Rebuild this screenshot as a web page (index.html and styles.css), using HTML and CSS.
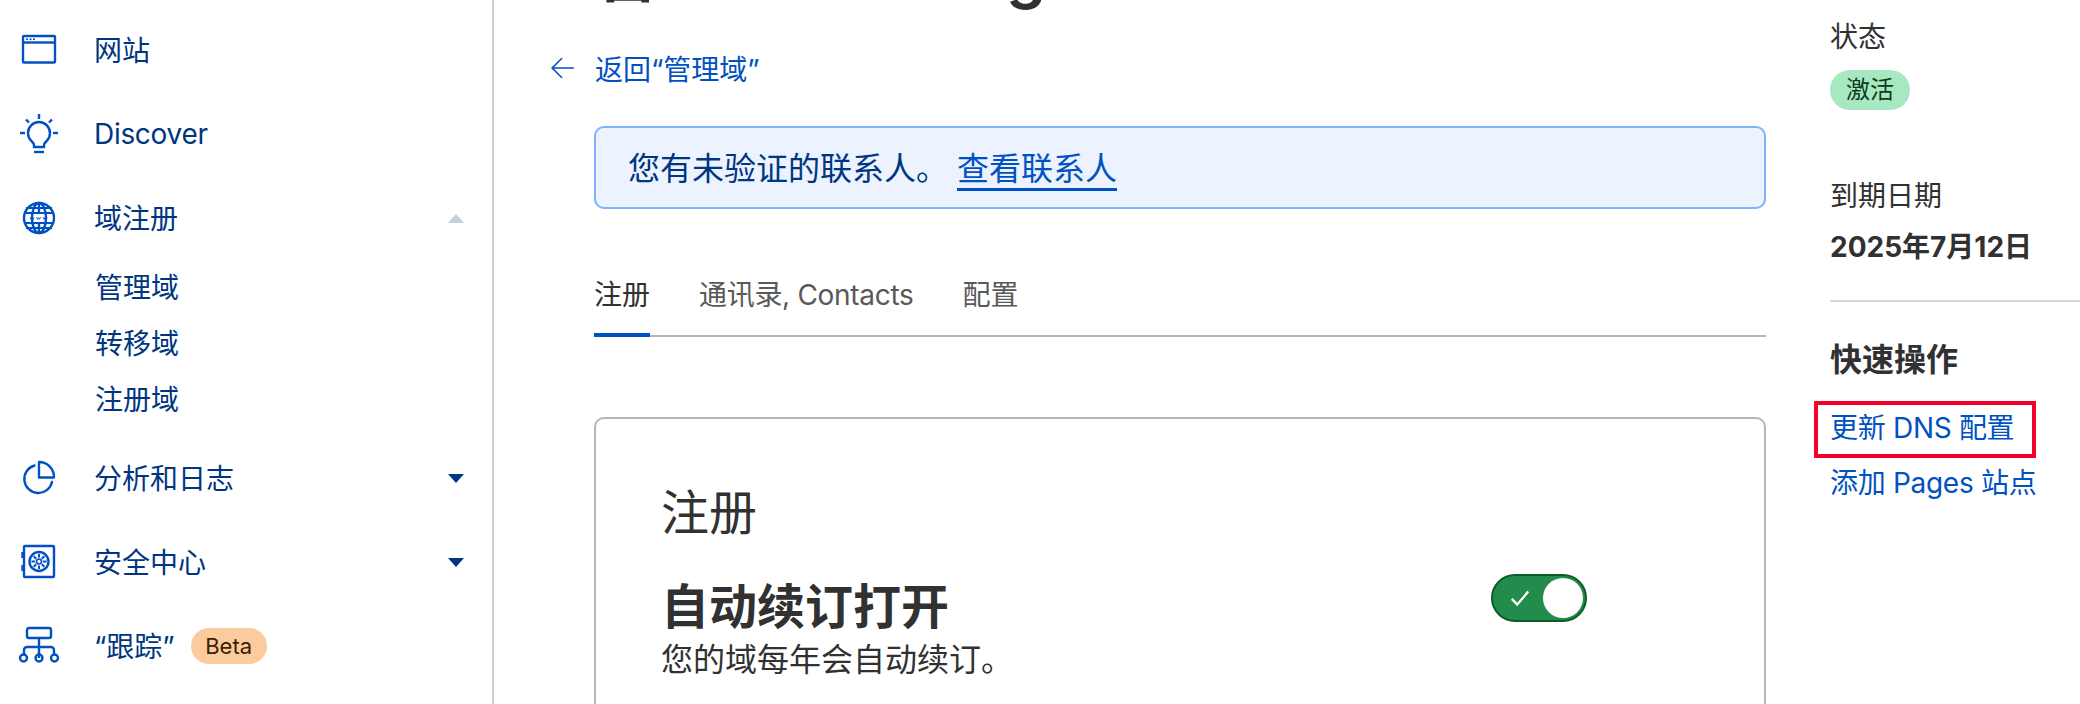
FILE: index.html
```html
<!DOCTYPE html>
<html lang="zh-CN">
<head>
    <meta charset="UTF-8">
    <meta name="viewport" content="width=device-width, initial-scale=1.0">
    <title>管理域</title>
    <link rel="stylesheet" href="styles.css">
</head>
<body>
    <aside class="sidebar">
        <a class="nav-item">
            <svg class="nav-icon" viewBox="0 0 40 40" fill="none" stroke="currentColor" stroke-width="2.4" stroke-linejoin="round">
                <rect x="4" y="6" width="32" height="26.5" rx="1"></rect>
                <line x1="4" y1="12.5" x2="36" y2="12.5"></line>
                <line x1="7" y1="9.3" x2="9" y2="9.3" stroke-width="1.6"></line>
                <line x1="10.5" y1="9.3" x2="12.5" y2="9.3" stroke-width="1.6"></line>
                <line x1="14" y1="9.3" x2="16" y2="9.3" stroke-width="1.6"></line>
            </svg>
            <span class="nav-label">网站</span>
        </a>
        <a class="nav-item">
            <svg class="nav-icon" viewBox="0 0 40 40" fill="none" stroke="currentColor" stroke-width="2.4">
                <path d="M15 33v-2c0-1.500-1-2-2.600-4a11 11 0 1 1 15.200 0c-1.600 2-2.600 2.500-2.600 4v2z"></path>
                <line x1="15" y1="38" x2="25" y2="38"></line>
                <line x1="20" y1="0" x2="20" y2="5"></line>
                <line x1="7" y1="5.500" x2="10" y2="8.500"></line>
                <line x1="33" y1="5.500" x2="30" y2="8.500"></line>
                <line x1="1" y1="19" x2="6" y2="19"></line>
                <line x1="34" y1="19" x2="39" y2="19"></line>
            </svg>
            <span class="latin">Discover</span>
        </a>
        <a class="nav-item">
            <svg class="nav-icon" viewBox="0 0 40 40" fill="none" stroke="currentColor" stroke-width="2.400">
                <circle cx="20" cy="20" r="15"></circle>
                <ellipse cx="20" cy="20" rx="7" ry="15"></ellipse>
                <line x1="20" y1="5" x2="20" y2="15"></line>
                <line x1="20" y1="25" x2="20" y2="35"></line>
                <path d="M7 10h26M6 15h28M6 25h28M7 30h26" stroke-width="2"></path>
                <path d="M11 19l1 2.500 1-2 1 2 1-2.500M17.500 19l1 2.500 1-2 1 2 1-2.500M24 19l1 2.500 1-2 1 2 1-2.500" stroke-width="0.800"></path>
            </svg>
            <span class="nav-label">域注册</span>
            <span class="caret caret-up"></span>
        </a>
        <div class="sub-nav">
            <a>管理域</a>
            <a>转移域</a>
            <a>注册域</a>
        </div>
        <a class="nav-item">
            <svg class="nav-icon" viewBox="0 0 40 40" fill="none" stroke="currentColor" stroke-width="2.400" stroke-linecap="round">
                <path d="M15.500 7.500A14 14 0 1 0 33 24"></path>
                <path d="M20 4a15 15 0 0 1 15 15.500H20z" stroke-linejoin="round"></path>
            </svg>
            <span class="nav-label">分析和日志</span>
            <span class="caret"></span>
        </a>
        <a class="nav-item">
            <svg class="nav-icon" viewBox="0 0 40 40" fill="none" stroke="currentColor" stroke-width="2.400">
                <rect x="5" y="4" width="30" height="31" rx="1"></rect>
                <line x1="3.500" y1="10" x2="3.500" y2="16"></line>
                <line x1="3.500" y1="23" x2="3.500" y2="29"></line>
                <circle cx="20" cy="19.500" r="9.500"></circle>
                <circle cx="20" cy="19.500" r="2.500" stroke-width="1.600"></circle>
                <path d="M20 12v3.500M20 23.500V27M12.500 19.500H16M24 19.500h3.500M14.700 14.200l2.500 2.500M22.800 22.300l2.500 2.500M25.300 14.200l-2.500 2.500M17.200 22.300l-2.500 2.500" stroke-width="2"></path>
            </svg>
            <span class="nav-label">安全中心</span>
            <span class="caret"></span>
        </a>
        <a class="nav-item">
            <svg class="nav-icon" viewBox="0 0 40 40" fill="none" stroke="currentColor" stroke-width="2.400">
                <rect x="8" y="2" width="24" height="10" rx="2"></rect>
                <path d="M20 12v20M5 28v-4a3 3 0 0 1 3-3h24a3 3 0 0 1 3 3v4"></path>
                <circle cx="4.500" cy="32" r="3.500"></circle>
                <circle cx="20" cy="32" r="3.500"></circle>
                <circle cx="35.500" cy="32" r="3.500"></circle>
            </svg>
            <span class="track-label">“跟踪”</span>
            <span class="beta">Beta</span>
        </a>
    </aside>

    <main class="content">
        <h1 class="page-title">管理 osmobug.cc</h1>
        <a class="back-link">
            <svg class="back-arrow" viewBox="0 0 24 24" fill="none" stroke="currentColor" stroke-width="1.500">
                <path d="M22 12H2M11 3l-9 9 9 9"></path>
            </svg>
            <span>返回“管理域”</span>
        </a>
        <div class="banner">您有未验证的联系人。<a>查看联系人</a></div>
        <div class="tabs">
            <a class="tab active">注册</a>
            <a class="tab latin">通讯录, Contacts</a>
            <a class="tab">配置</a>
        </div>
        <section class="card">
            <h2>注册</h2>
            <div class="card-row">
                <div>
                    <h3>自动续订打开</h3>
                    <p>您的域每年会自动续订。</p>
                </div>
                <div class="toggle">
                    <svg viewBox="0 0 24 24" fill="none" stroke="#fff" stroke-width="2.600">
                        <path d="M3 13l6 6L21 5"></path>
                    </svg>
                    <span class="knob"></span>
                </div>
            </div>
        </section>
    </main>

    <aside class="details">
        <div class="detail-label">状态</div>
        <span class="status">激活</span>
        <div class="detail-label expiry">到期日期</div>
        <div class="expiry-date">2025年7月12日</div>
        <hr>
        <h4>快速操作</h4>
        <a class="action highlighted">更新 DNS 配置</a>
        <a class="action">添加 Pages 站点</a>
    </aside>
</body>
</html>
```

FILE: styles.css
```css
:root {
    --navy: #003681;
    --blue: #0051c3;
    --text: #313131;
    --muted: #595959;
}

* {
    margin: 0;
    padding: 0;
    box-sizing: border-box;
}

html, body {
    height: 704px;
    overflow: hidden;
}

body {
    display: flex;
    background: white;
    color: var(--text);
    font-family: Inter, 'Noto Sans CJK SC', sans-serif;
    font-size: 28px;
}

.latin {
    letter-spacing: -0.3px;
}

/* sidebar */
.sidebar {
    width: 494px;
    flex-shrink: 0;
    height: 704px;
    border-right: 2px solid #cfcfcf;
    padding-top: 8px;
}

.nav-item {
    display: flex;
    align-items: center;
    height: 84px;
    padding-left: 19px;
    color: var(--navy);
}

.nav-icon {
    width: 40px;
    height: 40px;
    margin-right: 35px;
    color: var(--blue);
    flex-shrink: 0;
    overflow: visible;
}

.nav-label {
    flex: 1;
    margin-bottom: 2px;
}

.track-label {
    margin-bottom: 2px;
}

.caret {
    width: 0;
    height: 0;
    margin-right: 28px;
    border-left: 8px solid transparent;
    border-right: 8px solid transparent;
    border-top: 9px solid var(--navy);
}

.caret-up {
    border-top: none;
    border-bottom: 9px solid #c3cedf;
}

.sub-nav {
    display: flex;
    flex-direction: column;
    padding: 0 0 8px 95px;
    color: var(--navy);
}

.sub-nav a {
    height: 56px;
    line-height: 56px;
}

.beta {
    margin-left: 16px;
    width: 76px;
    height: 36px;
    line-height: 36px;
    text-align: center;
    border-radius: 18px;
    background: #fbcb9f;
    color: #3c2000;
    font-size: 22px;
}

/* main column */
.content {
    width: 1172px;
    flex-shrink: 0;
    margin-left: 100px;
    margin-top: -59px;
}

.page-title {
    font-size: 64px;
    line-height: 64px;
    font-weight: 600;
    letter-spacing: 2px;
    height: 64px;
    white-space: nowrap;
}

.back-link {
    display: flex;
    align-items: center;
    gap: 19px;
    height: 40px;
    margin: 43px 0 0 -44px;
    color: var(--blue);
}

.back-arrow {
    width: 26px;
    height: 26px;
}

.banner {
    height: 83px;
    line-height: 81px;
    margin-top: 38px;
    padding-left: 32px;
    background: #ecf3ff;
    border: 2px solid #7fb2ff;
    border-radius: 10px;
    font-size: 32px;
    color: var(--navy);
}

.banner a {
    color: var(--blue);
    text-decoration: underline;
    text-decoration-thickness: 3px;
    text-decoration-skip-ink: none;
    text-underline-offset: 8px;
    margin-left: 9px;
}

.tabs {
    display: flex;
    gap: 49px;
    margin-top: 50px;
    height: 78px;
    border-bottom: 2px solid #b6b6b6;
}

.tab {
    height: 78px;
    line-height: 72px;
    color: var(--muted);
}

.tab.active {
    color: var(--text);
    border-bottom: 4px solid var(--blue);
}

.card {
    margin-top: 80px;
    height: 400px;
    padding: 64px 66px 0 65px;
    border: 2px solid #b6b6b6;
    border-radius: 10px;
}

.card h2 {
    font-size: 48px;
    line-height: 60px;
    font-weight: 400;
}

.card-row {
    display: flex;
    justify-content: space-between;
    align-items: flex-start;
    margin-top: 31px;
    padding-right: 111px;
}

.card h3 {
    font-size: 48px;
    line-height: 66px;
    font-weight: 700;
}

.card p {
    font-size: 32px;
    line-height: 40px;
}

.toggle {
    display: flex;
    align-items: center;
    justify-content: space-between;
    width: 96px;
    height: 48px;
    padding: 0 2px 0 16px;
    background: #238b4b;
    border: 2px solid #0d5c2a;
    border-radius: 24px;
}

.toggle svg {
    width: 22px;
    height: 22px;
}

.knob {
    width: 40px;
    height: 40px;
    border-radius: 50%;
    background: white;
}

/* right column */
.details {
    flex: 1;
    margin-left: 64px;
    padding-top: 17px;
}

.detail-label {
    height: 40px;
    line-height: 40px;
}

.status {
    display: block;
    width: 80px;
    height: 40px;
    margin-top: 13px;
    line-height: 40px;
    text-align: center;
    border-radius: 20px;
    background: #a8e8c0;
    color: #0d3b20;
    font-size: 24px;
}

.expiry {
    margin-top: 66px;
}

.expiry-date {
    margin-top: 11px;
    height: 40px;
    line-height: 40px;
    font-weight: 700;
}

hr {
    margin-top: 33px;
    border: none;
    border-top: 2px solid #d9d9d9;
}

h4 {
    margin-top: 36px;
    height: 44px;
    line-height: 44px;
    font-size: 32px;
    font-weight: 700;
}

.action {
    position: relative;
    display: block;
    height: 55px;
    line-height: 55px;
    letter-spacing: -0.3px;
    color: var(--blue);
}

.action.highlighted {
    margin-top: 19px;
}

.highlighted::after {
    content: '';
    position: absolute;
    box-sizing: border-box;
    left: -16px;
    top: 0;
    width: 222px;
    height: 57px;
    border: 4px solid #f5002a;
}
```
